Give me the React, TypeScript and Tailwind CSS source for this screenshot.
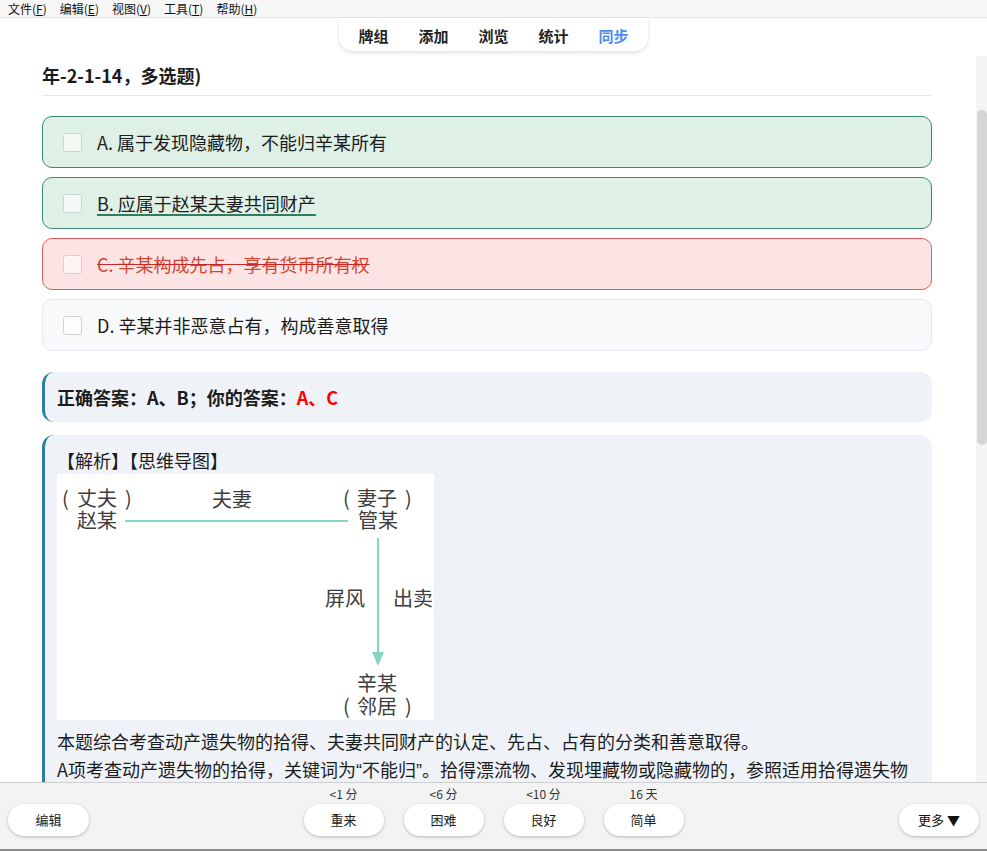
import React from "react";

const menus = [
  { label: "文件", key: "F" },
  { label: "编辑", key: "E" },
  { label: "视图", key: "V" },
  { label: "工具", key: "T" },
  { label: "帮助", key: "H" },
];

const tabs = ["牌组", "添加", "浏览", "统计", "同步"];

const answers = [
  { label: "<1 分", text: "重来" },
  { label: "<6 分", text: "困难" },
  { label: "<10 分", text: "良好" },
  { label: "16 天", text: "简单" },
];

function Checkbox() {
  return (
    <span className="w-[19px] h-[19px] shrink-0 rounded-[3px] border border-[#cfd3d1] bg-white/60" />
  );
}

function MindMap() {
  const t = "#3d3d3d";
  return (
    <svg width="377" height="246" viewBox="0 0 377 246" className="block bg-white mb-[7px]">
      <g fill={t} fontSize="20" fontFamily="'Noto Sans CJK SC', sans-serif">
        <text x="5" y="32">(</text>
        <text x="20" y="32">丈夫</text>
        <text x="68" y="32">)</text>
        <text x="20" y="54">赵某</text>
        <text x="155" y="33">夫妻</text>
        <text x="286" y="32">(</text>
        <text x="300" y="32">妻子</text>
        <text x="348" y="32">)</text>
        <text x="301" y="54">管某</text>
        <text x="268" y="132">屏风</text>
        <text x="336" y="132">出卖</text>
        <text x="300" y="217">辛某</text>
        <text x="286" y="240">(</text>
        <text x="300" y="240">邻居</text>
        <text x="348" y="240">)</text>
      </g>
      <line x1="68" y1="47" x2="291" y2="47" stroke="#86d6c4" strokeWidth="2" />
      <line x1="321" y1="64" x2="321" y2="186" stroke="#86d6c4" strokeWidth="2" />
      <path d="M315 178 L321 192 L327 178 Z" fill="#86d6c4" />
    </svg>
  );
}

export default function App() {
  return (
    <div className="w-[987px] h-[851px] flex flex-col overflow-hidden bg-white text-[#1c1c1c] font-['Noto_Sans_CJK_SC',sans-serif]">
      {/* Menu bar */}
      <div className="h-[18px] shrink-0 flex items-center gap-[13px] px-[8px] bg-[#f7f7f7] border-b border-[#e4e4e4] text-[12px] leading-none text-[#111]">
        {menus.map((m) => (
          <span key={m.key}>
            {m.label}(<u>{m.key}</u>)
          </span>
        ))}
      </div>

      {/* Tabs */}
      <div className="h-[38px] shrink-0 flex justify-center">
        <div className="h-[33px] flex items-center gap-[30px] px-[19px] pt-[3px] bg-white rounded-b-[14px] shadow-[0_2px_4px_rgba(0,0,0,0.12)] text-[15px] font-semibold">
          {tabs.map((t) => (
            <span key={t} className={t === "同步" ? "text-[#4b8ef1]" : "text-[#222]"}>
              {t}
            </span>
          ))}
        </div>
      </div>

      {/* Scroll area */}
      <div className="flex-1 flex min-h-0">
        <div className="flex-1 overflow-hidden pl-[42px] pr-[44px] pt-[6px]">
          <div className="text-[18px] leading-[26px] font-bold pb-[7px] border-b border-[#e6e8ec]">
            年-2-1-14，多选题)
          </div>

          <div className="mt-[20px] flex flex-col gap-[9px] text-[18px]">
            <div className="h-[52px] flex items-center gap-[15px] px-[20px] rounded-[10px] border border-[#3b8a6b] bg-[#dff0e7]">
              <Checkbox />
              <span>A. 属于发现隐藏物，不能归辛某所有</span>
            </div>
            <div className="h-[52px] flex items-center gap-[15px] px-[20px] rounded-[10px] border border-[#3b8a6b] bg-[#dff0e7]">
              <Checkbox />
              <span className="underline decoration-[#2f7d5e] decoration-2 underline-offset-[3px]">
                B. 应属于赵某夫妻共同财产
              </span>
            </div>
            <div className="h-[52px] flex items-center gap-[15px] px-[20px] rounded-[10px] border border-[#e25b5b] bg-[#fde4e4]">
              <Checkbox />
              <span className="text-[#d2452f] line-through decoration-[#c62828]">
                C. 辛某构成先占，享有货币所有权
              </span>
            </div>
            <div className="h-[52px] flex items-center gap-[15px] px-[20px] rounded-[10px] border border-[#e3e7ee] bg-[#f8f9fb]">
              <Checkbox />
              <span>D. 辛某并非恶意占有，构成善意取得</span>
            </div>
          </div>

          <div className="mt-[21px] h-[50px] flex items-center pl-[12px] rounded-[12px] border-l-[3px] border-[#2c7ea3] bg-[#eff3f8] text-[18px] font-bold">
            <span>
              正确答案：A、B；你的答案：<span className="text-[#ff0000]">A、C</span>
            </span>
          </div>

          <div className="mt-[13px] pl-[12px] pr-[16px] pt-[11px] pb-[16px] rounded-[12px] border-l-[3px] border-[#2c7ea3] bg-[#eff3f8] text-[18px] leading-[28px]">
            <div>【解析】【思维导图】</div>
            <MindMap />
            <p>本题综合考查动产遗失物的拾得、夫妻共同财产的认定、先占、占有的分类和善意取得。</p>
            <p>
              A项考查动产遗失物的拾得，关键词为
              <span className="font-['Liberation_Sans']">“</span>不能归
              <span className="font-['Liberation_Sans']">”</span>
              。拾得漂流物、发现埋藏物或隐藏物的，参照适用拾得遗失物的有关规定。
            </p>
          </div>
        </div>

        {/* Scrollbar */}
        <div className="w-[11px] shrink-0 bg-[#f5f5f5] pt-[54px]">
          <div className="h-[335px] w-[10px] ml-[1px] rounded-[5px] bg-[#d5d5d5]" />
        </div>
      </div>

      {/* Bottom bar */}
      <div className="h-[69px] shrink-0 grid grid-cols-[1fr_auto_1fr] items-end px-[8px] pb-[13px] bg-[#f3f3f3] border-t border-[#cfcfcf] border-b-2 border-b-[#8c8c8c] text-[13px]">
        <button className="justify-self-start w-[81px] h-[32px] rounded-full bg-white shadow-[0_1px_3px_rgba(0,0,0,0.25)] text-[#222]">
          编辑
        </button>
        <div className="flex gap-[20px]">
          {answers.map((a) => (
            <div key={a.text} className="flex flex-col items-center gap-[2px]">
              <span className="text-[12px] leading-[16px] text-[#333]">{a.label}</span>
              <button className="w-[80px] h-[32px] rounded-full bg-white shadow-[0_1px_3px_rgba(0,0,0,0.25)] text-[#222]">
                {a.text}
              </button>
            </div>
          ))}
        </div>
        <button className="justify-self-end w-[80px] h-[32px] rounded-full bg-white shadow-[0_1px_3px_rgba(0,0,0,0.25)] text-[#111]">
          更多 ▼
        </button>
      </div>
    </div>
  );
}
